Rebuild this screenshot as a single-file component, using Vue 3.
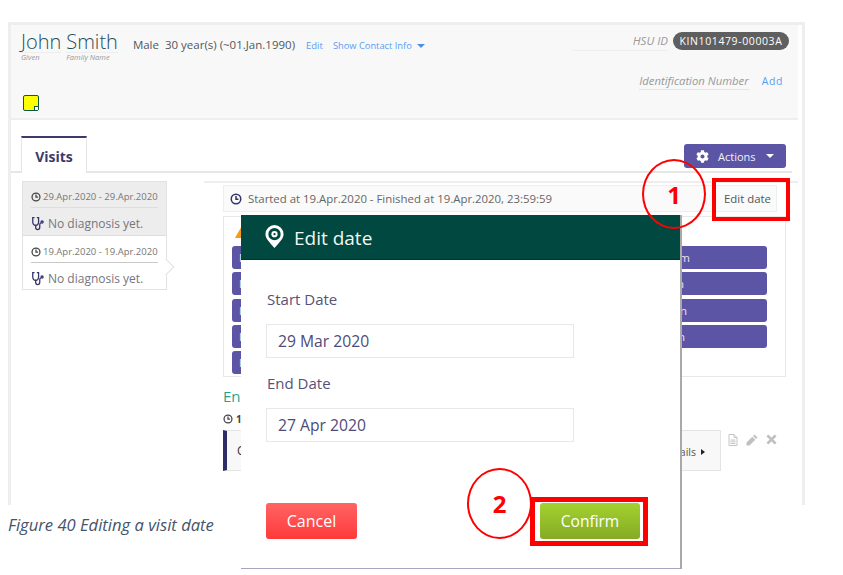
<template>
  <div class="page">
    <div class="frame">
      <header class="patient">
        <div class="patient-left">
          <div class="name-row">
            <div class="name-part given">
              <span class="name">John</span>
              <small>Given</small>
            </div>
            <div class="name-part family">
              <span class="name">Smith</span>
              <small>Family Name</small>
            </div>
            <span class="demo">Male&nbsp; 30 year(s) (~01.Jan.1990)</span>
            <a class="link edit-link">Edit</a>
            <a class="link">Show Contact Info</a>
            <span class="caret blue"></span>
          </div>
          <div class="sticky"><span></span></div>
        </div>
        <div class="patient-right">
          <div class="hsu-row">
            <span class="hsu-label">HSU ID</span>
            <span class="badge">KIN101479-00003A</span>
          </div>
          <div class="id-row">
            <span class="id-label">Identification Number</span>
            <a class="link add">Add</a>
          </div>
        </div>
      </header>

      <div class="tabs">
        <div class="tab">Visits</div>
        <button class="actions">
          <svg viewBox="0 0 512 512" width="13" height="13"><path fill="#fff" :d="cogPath" /></svg>
          <span>Actions</span>
          <span class="caret white"></span>
        </button>
      </div>

      <div class="body">
        <aside class="visits">
          <div v-for="(v, i) in visits" :key="i" class="visit" :class="{ active: i === 1 }">
            <div class="visit-date">
              <svg viewBox="0 0 24 24" width="10" height="10" class="clock"><circle cx="12" cy="12" r="9.5" /><path d="M12 6v6.5h5" /></svg>
              {{ v }}
            </div>
            <div class="visit-diag">
              <svg viewBox="0 0 24 24" width="14" height="15" class="steth">
                <path d="M6 2H3v7c0 4 2.500 6 5 6s5-2 5-6V2h-3" />
                <path d="M8 15v3.500c0 2.500 1.500 4 3.500 4s3.500-1.500 3.500-4V14c0-1.500 1-2.500 2-2.500" />
                <circle cx="19" cy="9.500" r="1.800" />
              </svg>
              No diagnosis yet.
            </div>
          </div>
        </aside>

        <section class="detail">
          <div class="started">
            <div class="started-text">
              <svg viewBox="0 0 24 24" width="12" height="12" class="clock dark"><circle cx="12" cy="12" r="9.500" /><path d="M12 6v6.500h5" /></svg>
              Started at 19.Apr.2020 - Finished at 19.Apr.2020, 23:59:59
            </div>
            <button class="edit-date">Edit date</button>
          </div>

          <div class="forms">
            <svg class="warn" viewBox="0 0 16 14" width="16" height="14"><path fill="#f59a1b" d="M8 0l8 14H0z" /></svg>
            <div class="form-cols">
              <div class="form-col">
                <div v-for="(l, i) in leftForms" :key="i" class="form-btn">{{ l }}</div>
              </div>
              <div class="form-col right">
                <div v-for="(r, i) in rightForms" :key="i" class="form-btn" :style="{ paddingRight: r.pad + 'px' }">{{ r.t }}</div>
              </div>
            </div>
          </div>

          <div class="enc-title">En</div>
          <div class="enc-date">
            <svg viewBox="0 0 24 24" width="10" height="10" class="clock"><circle cx="12" cy="12" r="9.500" /><path d="M12 6v6.500h5" /></svg>
            <b>1</b>
          </div>
          <div class="enc-row">
            <div class="enc-card">
              <span class="enc-name">C</span>
              <span class="enc-details">ails <i class="tri"></i></span>
            </div>
            <div class="enc-icons">
              <svg viewBox="0 0 20 24" width="10" height="12"><path fill="none" stroke="#c4c4c4" stroke-width="2" d="M2 1h10l6 6v16H2zM12 1v6h6M5 12h10M5 15.500h10M5 19h10" /></svg>
              <svg viewBox="0 0 24 24" width="12" height="12"><path fill="#c0c0c0" d="M17 1l6 6-3 3-6-6zM12.500 5.500l6 6L7 23H1v-6z" /></svg>
              <svg viewBox="0 0 24 24" width="11" height="11"><path fill="none" stroke="#c0c0c0" stroke-width="6" d="M3 3l18 18M21 3L3 21" /></svg>
            </div>
          </div>
        </section>
      </div>
    </div>

    <p class="caption">Figure 40 Editing a visit date</p>

    <div class="modal">
      <div class="modal-head">
        <svg viewBox="0 0 20 24" width="19" height="23">
          <path fill="#fff" fill-rule="evenodd" d="M10 0a9.500 9.500 0 0 1 9.500 9.500c0 4.500-3.500 7.500-9.500 14.500C4 17 .5 14 .5 9.500A9.500 9.500 0 0 1 10 0zm0 3a6.500 6.500 0 1 0 0 13 6.500 6.500 0 0 0 0-13z" />
          <circle cx="10" cy="9.500" r="3.300" fill="#fff" />
          <circle cx="10" cy="9.500" r="1.200" fill="#004840" />
        </svg>
        <span>Edit date</span>
      </div>
      <div class="modal-body">
        <label>Start Date</label>
        <div class="date-input">29 Mar 2020</div>
        <label>End Date</label>
        <div class="date-input">27 Apr 2020</div>
      </div>
      <div class="modal-foot">
        <button class="cancel">Cancel</button>
        <button class="confirm">Confirm</button>
      </div>
    </div>

    <div class="mark box-one"></div>
    <div class="mark circle-one">1</div>
    <div class="mark box-two"></div>
    <div class="mark circle-two">2</div>
  </div>
</template>

<script setup>
const visits = ['29.Apr.2020 - 29.Apr.2020', '19.Apr.2020 - 19.Apr.2020']
const leftForms = ['D', 'D', 'D', 'D', 'D']
const rightForms = [
  { t: 'm', pad: 77 },
  { t: 'n', pad: 83 },
  { t: 'n', pad: 80 },
  { t: 'n', pad: 82 }
]
const cogPath = 'M487.4 315.7l-42.6-24.6c4.3-23.2 4.3-47 0-70.2l42.6-24.6c4.9-2.8 7.1-8.6 5.5-14-11.1-35.6-30-67.8-54.7-94.6-3.8-4.1-10-5.1-14.8-2.3L380.8 110c-17.9-15.4-38.5-27.3-60.8-35.1V25.8c0-5.6-3.9-10.5-9.4-11.7-36.7-8.2-74.3-7.8-109.2 0-5.5 1.2-9.4 6.1-9.4 11.7V75c-22.2 7.9-42.8 19.8-60.8 35.1L88.7 85.5c-4.9-2.8-11-1.9-14.8 2.3-24.7 26.7-43.6 58.9-54.7 94.6-1.7 5.4.6 11.2 5.5 14L67.3 221c-4.3 23.2-4.3 47 0 70.2l-42.6 24.6c-4.9 2.8-7.1 8.6-5.5 14 11.1 35.6 30 67.8 54.7 94.6 3.8 4.1 10 5.1 14.8 2.3l42.6-24.6c17.9 15.4 38.5 27.3 60.8 35.1v49.2c0 5.6 3.9 10.5 9.4 11.7 36.7 8.2 74.3 7.8 109.2 0 5.5-1.2 9.4-6.1 9.4-11.7v-49.2c22.2-7.9 42.8-19.8 60.8-35.1l42.6 24.6c4.9 2.8 11 1.9 14.8-2.3 24.7-26.7 43.6-58.9 54.7-94.6 1.500-5.500-.7-11.300-5.600-14.100zM256 336c-44.100 0-80-35.900-80-80s35.900-80 80-80 80 35.900 80 80-35.900 80-80 80z'
</script>

<style>
html, body {
  margin: 0;
  background: #fff;
}
</style>

<style scoped>
.page {
  position: relative;
  width: 843px;
  height: 575px;
  overflow: hidden;
  background: #fff;
  font-family: "Open Sans", sans-serif;
  padding: 22px 0 0 8px;
  box-sizing: border-box;
}

.frame {
  width: 797px;
  height: 483px;
  box-sizing: border-box;
  border: 3px solid #eeeeee;
  border-bottom: 0;
  overflow: hidden;
}

.patient {
  width: 787px;
  height: 95px;
  box-sizing: border-box;
  background: #f8f8f8;
  border-bottom: 2px solid #eeeeee;
  border-top-left-radius: 4px;
  padding: 6px 9px 0 10px;
  display: flex;
  justify-content: space-between;
}

.patient-left {
  display: flex;
  flex-direction: column;
}

.name-row {
  display: flex;
  align-items: flex-start;
}

.name-part {
  display: flex;
  flex-direction: column;
  margin-right: 5px;
}

.name {
  font-size: 20px;
  line-height: 21px;
  font-weight: 300;
  color: #1f4f56;
  border-bottom: 1px solid #eeeeee;
  white-space: nowrap;
}

.name-part small {
  font-size: 7.500px;
  line-height: 9px;
  font-style: italic;
  color: #999;
}

.family {
  margin-right: 15px;
}

.demo {
  font-size: 11.500px;
  line-height: 20px;
  margin-top: 4px;
  color: #50585c;
  white-space: nowrap;
}

.link {
  font-size: 9.300px;
  line-height: 20px;
  margin-top: 5px;
  color: #5b9cf2;
  white-space: nowrap;
}

.edit-link {
  margin: 5px 10px 0 11px;
  font-size: 9.500px;
}

.caret {
  display: inline-block;
  width: 0;
  height: 0;
  border-left: 4px solid transparent;
  border-right: 4px solid transparent;
}

.caret.blue {
  border-top: 4px solid #4a90e8;
  margin: 13px 0 0 5px;
}

.caret.white {
  border-top: 4px solid #fff;
}

.sticky {
  width: 16px;
  height: 16px;
  box-sizing: border-box;
  margin: 33px 0 0 2px;
  background: #ffff00;
  border: 1.500px solid #0f5a44;
  border-radius: 2px;
  position: relative;
}

.sticky span {
  position: absolute;
  right: 0;
  bottom: 0;
  width: 3px;
  height: 3px;
  background: #fff;
  border-top: 1px solid #0f5a44;
  border-left: 1px solid #0f5a44;
}

.patient-right {
  display: flex;
  flex-direction: column;
  align-items: flex-end;
  margin-top: 1px;
}

.hsu-row {
  display: flex;
  align-items: flex-start;
}

.hsu-label {
  width: 95px;
  box-sizing: border-box;
  text-align: right;
  font-size: 11.500px;
  line-height: 18px;
  font-style: italic;
  color: #999;
  border-bottom: 1px solid #eeeeee;
  margin-right: 5px;
}

.badge {
  width: 116px;
  height: 18px;
  border-radius: 9px;
  background: #5f5f5f;
  color: #fff;
  font-size: 10.500px;
  line-height: 18px;
  text-align: center;
  letter-spacing: 0.6px;
}

.id-row {
  display: flex;
  align-items: flex-start;
  margin: 21px 6px 0 0;
}

.id-label {
  font-size: 11.300px;
  line-height: 17px;
  font-style: italic;
  color: #999;
  border-bottom: 1px solid #e4e4e4;
}

.add {
  margin: -1px 0 0 13px;
  font-size: 10.500px;
  letter-spacing: 0.6px;
}

.tabs {
  width: 781px;
  height: 53px;
  box-sizing: border-box;
  border-bottom: 2px solid #e6e6e6;
  padding: 16px 6px 0 10px;
  display: flex;
  justify-content: space-between;
}

.tab {
  width: 66px;
  height: 37px;
  box-sizing: border-box;
  background: #fff;
  border: 1px solid #e4e4e4;
  border-top: 2px solid #3b3a6b;
  border-bottom: 0;
  text-align: center;
  font-size: 14px;
  font-weight: 700;
  line-height: 38px;
  color: #3b3a6b;
}

.actions {
  width: 102px;
  height: 24px;
  margin-top: 8px;
  border: 0;
  border-radius: 3px;
  background: #5c55a5;
  color: #f1f0f8;
  font-family: inherit;
  font-size: 11px;
  display: flex;
  align-items: center;
  padding: 0 0 0 12px;
  box-sizing: border-box;
}

.actions span:first-of-type {
  margin: 0 10px 0 9px;
}

.body {
  display: flex;
  padding: 8px 0 0 11px;
}

.visits {
  width: 145px;
  height: 109px;
  box-sizing: border-box;
  border: 1px solid #e2e2e2;
  flex: none;
}

.visit {
  height: 53px;
  box-sizing: border-box;
  background: #ededed;
  padding: 8px 8px 0 8px;
  color: #777;
  position: relative;
}

.visit.active {
  height: 54px;
  background: #fff;
  border-top: 1px solid #ddd;
  padding-top: 9px;
}

.visit.active::after {
  content: '';
  position: absolute;
  right: -6px;
  top: 25px;
  width: 11px;
  height: 11px;
  background: #fff;
  border-top: 1px solid #e2e2e2;
  border-right: 1px solid #e2e2e2;
  transform: rotate(45deg);
}

.visit-date {
  font-size: 9.500px;
  line-height: 13px;
  padding-bottom: 4px;
  border-bottom: 1px solid #dedede;
  white-space: nowrap;
  display: flex;
  align-items: center;
  gap: 2px;
}

.visit.active .visit-date {
  border-bottom-color: #c8c8c8;
}

.visit-diag {
  font-size: 12px;
  line-height: 21px;
  margin-top: 5px;
  white-space: nowrap;
  display: flex;
  align-items: center;
  gap: 3px;
  color: #75757f;
}

.clock {
  fill: none;
  stroke: #444;
  stroke-width: 3;
  flex: none;
}

.clock.dark {
  stroke: #34336b;
}

.steth {
  fill: none;
  stroke: #34336b;
  stroke-width: 2.200;
  flex: none;
}

.detail {
  width: 594px;
  margin-left: 37px;
  border-top: 2px solid #eeeeee;
  flex: none;
  padding: 2px 0 0 19px;
  box-sizing: border-box;
  height: 300px;
}

.started {
  width: 554px;
  height: 27px;
  box-sizing: border-box;
  background: #fafafa;
  border: 1px solid #eeeeee;
  display: flex;
  justify-content: space-between;
  align-items: center;
  padding-left: 6px;
}

.started-text {
  display: flex;
  align-items: center;
  gap: 6px;
  font-size: 11.400px;
  color: #666;
  white-space: nowrap;
}

.edit-date {
  height: 25px;
  width: 60px;
  padding: 0 0 0 3px;
  border: 0;
  background: transparent;
  font-family: inherit;
  font-size: 11.400px;
  color: #555;
}

.forms {
  width: 563px;
  height: 161px;
  margin-top: 4px;
  box-sizing: border-box;
  border: 1px solid #e8e8e8;
  padding: 7px 18px 0 8px;
}

.warn {
  display: block;
  margin: 0 0 8px 3px;
}

.form-cols {
  display: flex;
  justify-content: space-between;
}

.form-col {
  width: 240px;
  display: flex;
  flex-direction: column;
  gap: 3.250px;
}

.form-col.right {
  width: 267px;
}

.form-btn {
  height: 23px;
  border-radius: 3px;
  background: #5c55a5;
  color: #e6e5f2;
  font-size: 11.500px;
  line-height: 23px;
  padding-left: 7px;
  box-sizing: border-box;
}

.form-col.right .form-btn {
  text-align: right;
}

.enc-title {
  font-size: 15px;
  line-height: 20px;
  margin-top: 9px;
  color: #1fa58f;
}

.enc-date {
  font-size: 10px;
  line-height: 14px;
  margin-top: 6px;
  color: #444;
  display: flex;
  align-items: center;
  gap: 3px;
}

.enc-row {
  display: flex;
  margin-top: 4px;
}

.enc-card {
  width: 498px;
  height: 41px;
  box-sizing: border-box;
  background: #f8f8f8;
  border: 1px solid #e4e4e4;
  border-left: 4px solid #2e2d66;
  display: flex;
  justify-content: space-between;
  align-items: center;
  padding: 0 15px 0 10px;
}

.enc-name {
  font-size: 12px;
  color: #333;
}

.enc-details {
  font-size: 10.500px;
  color: #555;
  display: flex;
  align-items: center;
  gap: 5px;
  margin-top: 2px;
}

.tri {
  width: 0;
  height: 0;
  border-top: 3.500px solid transparent;
  border-bottom: 3.500px solid transparent;
  border-left: 4px solid #222;
}

.enc-icons {
  display: flex;
  align-items: flex-start;
  gap: 8px;
  padding: 4px 0 0 7px;
}

.caption {
  margin: 10px 0 0 0;
  font-size: 16.600px;
  line-height: 20px;
  font-style: italic;
  color: #44546a;
}

.modal {
  position: absolute;
  left: 241px;
  top: 215px;
  width: 441px;
  height: 354px;
  box-sizing: border-box;
  background: #fff;
  border-right: 2px solid #a9a9a9;
  border-bottom: 1px solid #a8a5c0;
  display: flex;
  flex-direction: column;
}

.modal-head {
  height: 45px;
  flex: none;
  background: #004840;
  border-bottom: 1px solid #223;
  box-sizing: border-box;
  display: flex;
  align-items: center;
  padding: 2px 0 0 24px;
  gap: 10px;
  color: #f2f6f5;
  font-size: 19px;
  font-weight: 400;
}

.modal-head svg {
  margin-top: -3px;
}

.modal-body {
  padding: 28px 0 0 25px;
  display: flex;
  flex-direction: column;
}

.modal-body label {
  font-size: 15px;
  line-height: 22px;
  padding-left: 1px;
  color: #55527a;
}

.date-input {
  width: 308px;
  height: 34px;
  box-sizing: border-box;
  border: 1px solid #e8e8e8;
  padding-left: 11px;
  margin: 14px 0;
  font-size: 15.700px;
  line-height: 32px;
  color: #4e4b78;
}

.modal-foot {
  display: flex;
  justify-content: space-between;
  padding: 47px 40px 0 25px;
}

.modal-foot button {
  height: 36px;
  border: 0;
  border-radius: 3px;
  color: #fff;
  font-family: inherit;
  font-size: 16px;
  padding: 0;
}

.modal-foot .confirm {
  font-size: 15.500px;
}

.cancel {
  width: 91px;
  background: linear-gradient(#ff6464, #ff3a3a);
}

.confirm {
  width: 100px;
  background: linear-gradient(#a4d130, #84ab24);
}

.mark {
  position: absolute;
  box-sizing: border-box;
}

.box-one {
  left: 712px;
  top: 178px;
  width: 78px;
  height: 43px;
  border: 4px solid #ff0000;
}

.box-two {
  left: 530px;
  top: 497px;
  width: 118px;
  height: 49px;
  border: 5px solid #ff0000;
}

.circle-one,
.circle-two {
  border: 2px solid #ff0000;
  border-radius: 50%;
  color: #ff0000;
  font-family: "Open Sans", sans-serif;
  font-weight: 700;
  font-size: 24px;
  display: flex;
  align-items: center;
  justify-content: center;
}

.circle-one {
  left: 642px;
  top: 159px;
  width: 64px;
  height: 70px;
}

.circle-two {
  left: 467px;
  top: 468px;
  width: 65px;
  height: 71px;
}
</style>
